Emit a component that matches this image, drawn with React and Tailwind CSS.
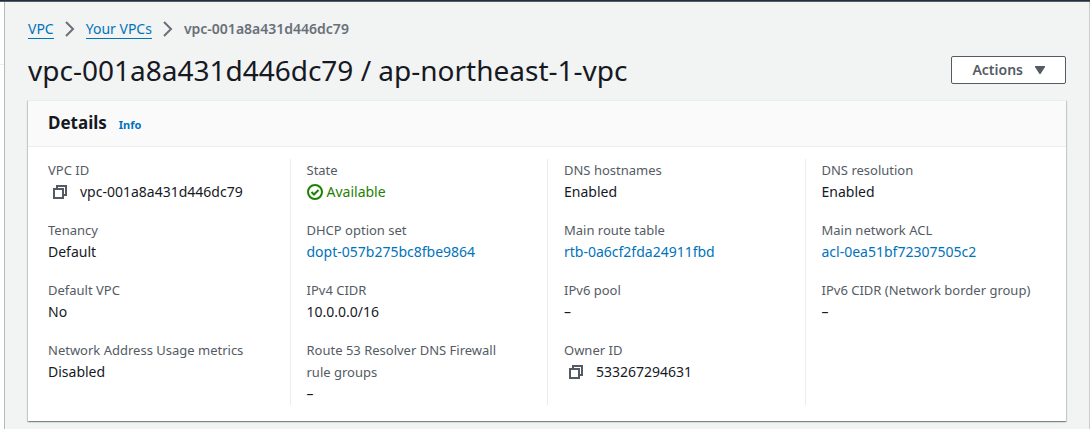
import React from "react";

const link = "text-[#0073bb] hover:underline";

function CopyIcon() {
  return (
    <svg width="14" height="14" viewBox="0 0 14 14" fill="none" stroke="#545b64" strokeWidth="2" aria-hidden="true">
      <path d="M1 4h9v9H1z" />
      <path d="M4 4V1h9v9h-3" />
    </svg>
  );
}

function Copyable({ children }) {
  return (
    <span className="flex items-center gap-[13px] pl-[5px]">
      <button type="button" aria-label="Copy" className="flex">
        <CopyIcon />
      </button>
      {children}
    </span>
  );
}

function Available() {
  return (
    <span className="flex items-center gap-1 text-[#1d8102]">
      <svg width="16" height="16" viewBox="0 0 16 16" fill="none" stroke="currentColor" strokeWidth="2" aria-hidden="true">
        <circle cx="8" cy="8" r="7" />
        <path d="M4.5 8l2.5 2.5L11.5 6" />
      </svg>
      Available
    </span>
  );
}

function Chevron() {
  return (
    <svg width="10" height="16" viewBox="0 0 10 16" fill="none" stroke="#687078" strokeWidth="2" aria-hidden="true">
      <path d="M1 1l7 7-7 7" />
    </svg>
  );
}

const columns = [
  [
    ["VPC ID", <Copyable>vpc-001a8a431d446dc79</Copyable>],
    ["Tenancy", "Default"],
    ["Default VPC", "No"],
    ["Network Address Usage metrics", "Disabled"],
  ],
  [
    ["State", <Available />],
    ["DHCP option set", <a href="#dhcp" className={link}>dopt-057b275bc8fbe9864</a>],
    ["IPv4 CIDR", "10.0.0.0/16"],
    ["Route 53 Resolver DNS Firewall rule groups", "–"],
  ],
  [
    ["DNS hostnames", "Enabled"],
    ["Main route table", <a href="#routes" className={link}>rtb-0a6cf2fda24911fbd</a>],
    ["IPv6 pool", "–"],
    ["Owner ID", <Copyable>533267294631</Copyable>],
  ],
  [
    ["DNS resolution", "Enabled"],
    ["Main network ACL", <a href="#acl" className={link}>acl-0ea51bf72307505c2</a>],
    ["IPv6 CIDR (Network border group)", "–"],
  ],
];

export default function App() {
  return (
    <div className="flex min-h-screen flex-col bg-[#f2f3f3] font-['Noto_Sans',sans-serif] text-[14px] leading-[22px] text-[#16191f]">
      <div className="h-0.5 border-b border-[#545b64] bg-[#232f3e]" />
      <div className="flex flex-1">
        <aside className="w-[5px] border-r border-[#b4babd] bg-white">
          <div className="h-[63px] border-b border-[#eaeded]" />
        </aside>
        <main className="min-w-0 flex-1 border-r border-[#c8cccd] pt-4 pr-[23px] pb-2 pl-[23px]">
          <nav aria-label="Breadcrumb">
            <ol className="flex items-center gap-[11px]">
              <li>
                <a href="#vpc" className="block border-b border-[#0073bb] leading-[19px] text-[#0073bb]">VPC</a>
              </li>
              <li><Chevron /></li>
              <li>
                <a href="#vpcs" className="block border-b border-[#0073bb] leading-[19px] text-[#0073bb]">Your VPCs</a>
              </li>
              <li><Chevron /></li>
              <li className="font-semibold text-[#687078]">vpc-001a8a431d446dc79</li>
            </ol>
          </nav>
          <header className="mt-3 flex items-center justify-between">
            <h1 className="text-[28px] leading-9">vpc-001a8a431d446dc79 / ap-northeast-1-vpc</h1>
            <button type="button" className="flex h-7 items-center gap-3 rounded-xs border border-[#545b64] bg-white px-5 font-semibold text-[#545b64]">
              Actions
              <svg width="10" height="8" viewBox="0 0 10 8" fill="currentColor" aria-hidden="true">
                <path d="M0 0h10v1L5.5 8h-1L0 1z" />
              </svg>
            </button>
          </header>
          <section className="mt-3 border-t border-[#eaeded] bg-white shadow-[0_1px_1px_0_rgba(0,28,36,0.3),1px_1px_1px_0_rgba(0,28,36,0.15),-1px_1px_1px_0_rgba(0,28,36,0.15)]">
            <div className="flex h-[46px] items-center gap-3 border-b border-[#eaeded] bg-[#fafafa] px-5 pb-0.5">
              <h2 className="text-[17px] font-bold">Details</h2>
              <a href="#info" className="pt-1 text-[11px] font-bold text-[#0073bb]">Info</a>
            </div>
            <div className="grid grid-cols-4 px-1 pt-3 pb-4">
              {columns.map((items, i) => (
                <dl key={i} className="flex flex-col gap-4 border-[#eaeded] pr-7 pl-4 not-first:border-l">
                  {items.map(([label, value]) => (
                    <div key={label}>
                      <dt className="text-[13px] text-[#545b64]">{label}</dt>
                      <dd>{value}</dd>
                    </div>
                  ))}
                </dl>
              ))}
            </div>
          </section>
        </main>
      </div>
    </div>
  );
}
